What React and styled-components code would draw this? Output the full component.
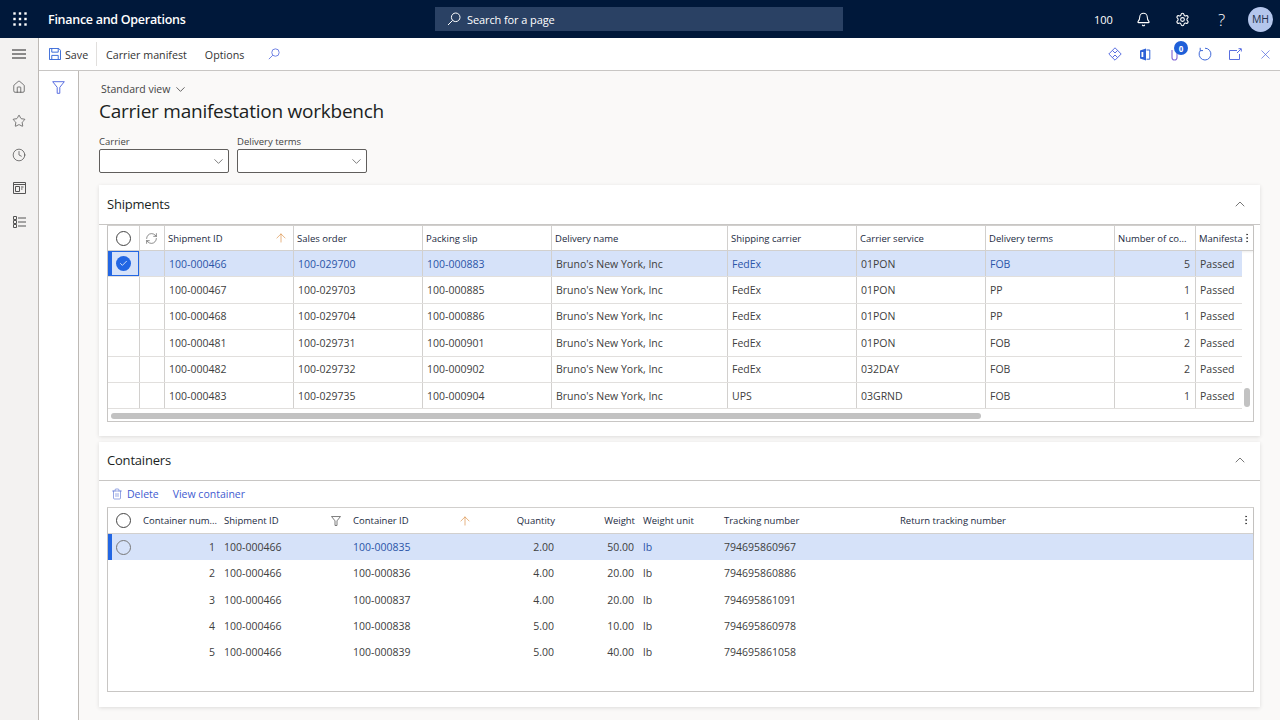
import styled, { createGlobalStyle } from "styled-components";
import { Bell, Settings, Home, Star, Clock, ChevronDown, ChevronUp, X, RefreshCw, Trash2, ArrowUp, EllipsisVertical, Check } from "lucide-react";

const GlobalStyle = createGlobalStyle`
    * { box-sizing: border-box; }
    html, body { margin: 0; height: 100%; }
    body {
        width: 1280px;
        height: 720px;
        overflow: hidden;
        font-family: "Open Sans", "Noto Sans", sans-serif;
        font-size: 10.5px;
        color: #333;
        background: #faf9f8;
    }
`;

const shipmentHead = "32px 25px 129px 129px 129px 176px 129px 129px 129px 81px 46px 13px";
const shipmentCols = "32px 25px 129px 129px 129px 176px 129px 129px 129px 81px 46px";
const containerCols = "32px 80px 129px 130px 80px 80px 81px 176px 1fr";

const shipments = [
    ["100-000466", "100-029700", "100-000883", "FedEx", "01PON", "FOB", 5],
    ["100-000467", "100-029703", "100-000885", "FedEx", "01PON", "PP", 1],
    ["100-000468", "100-029704", "100-000886", "FedEx", "01PON", "PP", 1],
    ["100-000481", "100-029731", "100-000901", "FedEx", "01PON", "FOB", 2],
    ["100-000482", "100-029732", "100-000902", "FedEx", "032DAY", "FOB", 2],
    ["100-000483", "100-029735", "100-000904", "UPS", "03GRND", "FOB", 1],
];

const containers = [
    [1, "100-000835", "2.00", "50.00", "794695860967"],
    [2, "100-000836", "4.00", "20.00", "794695860886"],
    [3, "100-000837", "4.00", "20.00", "794695861091"],
    [4, "100-000838", "5.00", "10.00", "794695860978"],
    [5, "100-000839", "5.00", "40.00", "794695861058"],
];

function Waffle() {
    return (
        <svg width="14" height="14" viewBox="0 0 14 14" fill="#fff">
            {[1.5, 7, 12.5].map(y => [1.5, 7, 12.5].map(x => <rect key={`${x}-${y}`} x={x - 1.2} y={y - 1.2} width="2.4" height="2.4" />))}
        </svg>
    );
}

function SearchGlass({ color, size = 14 }) {
    return (
        <svg width={size} height={size} viewBox="0 0 14 14" fill="none" stroke={color} strokeWidth="1">
            <circle cx="8.7" cy="5.3" r="4.3" />
            <path d="M5.6 8.4 1 13" />
        </svg>
    );
}

function SaveIcon() {
    return (
        <svg width="12" height="12" viewBox="0 0 13 13" fill="none" stroke="#2f62d6" strokeWidth="1">
            <path d="M.5.5h10l2 2v10H.5z" />
            <path d="M3 .5v4h7v-4M3 12.5V8h7v4.5" />
        </svg>
    );
}

function Hamburger() {
    return (
        <svg width="14" height="10" viewBox="0 0 14 10" stroke="#222" strokeWidth="1">
            <path d="M0 1h14M0 5h14M0 9h14" />
        </svg>
    );
}

function Workspace() {
    return (
        <svg width="13" height="12" viewBox="0 0 13 12" fill="none" stroke="#555" strokeWidth="1">
            <path d="M.5.5h12v11H.5zM.5 2.5h12M2.5 4.5h4v5h-4zM8 5h2.5M8 7h1.5" />
        </svg>
    );
}

function ModulesIcon() {
    return (
        <svg width="13" height="12" viewBox="0 0 13 12" fill="none" stroke="#555" strokeWidth="1">
            <path d="M.5.5h3v3h-3zM.5 4.5h3v3h-3zM.5 8.5h3v3h-3zM5 2h8M5 6h8M5 10h8" />
        </svg>
    );
}

function FunnelIcon({ color, size = 13 }) {
    return (
        <svg width={size} height={size} viewBox="0 0 13 13" fill="none" stroke={color} strokeWidth="1">
            <path d="M.7.7h11.6L7.8 6.3v6L5.2 12.3V6.3z" />
        </svg>
    );
}

function DiamondIcon() {
    return (
        <svg width="14" height="14" viewBox="0 0 14 14" fill="none" stroke="#5a6fe0" strokeWidth="1">
            <path d="M7 .8 13.2 7 7 13.2.8 7z" />
            <path d="M4.4 3.4 7 6 9.6 3.4M4.4 10.6 7 8l2.6 2.6" />
        </svg>
    );
}

function OfficeIcon() {
    return (
        <svg width="12" height="13" viewBox="0 0 12 13">
            <path d="M1 2.6 7 .5v12L1 10.6z" fill="#2f62d6" />
            <path d="M7.5 2h3.3v9.2H7.5" fill="none" stroke="#2f62d6" />
            <path d="M3.4 4v5" stroke="#fff" strokeWidth="1.8" />
        </svg>
    );
}

function PopOut() {
    return (
        <svg width="13" height="12" viewBox="0 0 13 12" fill="none" stroke="#5a6fe0" strokeWidth="1">
            <path d="M8 2.5H.5v9h10V6M8 5l4-4M9.5 .7h2.8v2.8" />
        </svg>
    );
}

function RefreshRing() {
    return (
        <svg width="14" height="14" viewBox="0 0 14 14" fill="none" stroke="#3f68d8" strokeWidth="1">
            <path d="M7 1.2a5.9 5.9 0 1 1-4.6 2.2" />
            <path d="M2.2 .8v2.8H5" />
        </svg>
    );
}

function Radio({ $dim }) {
    return <RadioCircle $dim={$dim} />;
}

export default function App() {
    return (
        <>
            <GlobalStyle />
            <Page>
                <TopBar>
                    <WaffleSlot><Waffle /></WaffleSlot>
                    <AppName>Finance and Operations</AppName>
                    <SearchBox>
                        <SearchGlass color="#fff" />
                        <span>Search for a page</span>
                    </SearchBox>
                    <TopRight>
                        <Company>100</Company>
                        <TopIcon><Bell size={15} strokeWidth={1.7} /></TopIcon>
                        <TopIcon><Settings size={15} strokeWidth={1.7} /></TopIcon>
                        <HelpMark>?</HelpMark>
                        <Avatar>MH</Avatar>
                    </TopRight>
                </TopBar>

                <Body>
                    <Rail>
                        <RailItem $h={32}><Hamburger /></RailItem>
                        <RailItem><Home size={14} strokeWidth={1.2} color="#444" /></RailItem>
                        <RailItem><Star size={14} strokeWidth={1.2} color="#444" /></RailItem>
                        <RailItem><Clock size={14} strokeWidth={1.2} color="#444" /></RailItem>
                        <RailItem $h={32}><Workspace /></RailItem>
                        <RailItem $h={35}><ModulesIcon /></RailItem>
                    </Rail>

                    <Main>
                        <ActionBar>
                            <SaveButton><SaveIcon /><span>Save</span></SaveButton>
                            <ActionTab>Carrier manifest</ActionTab>
                            <ActionTab>Options</ActionTab>
                            <ActionSearch><SearchGlass color="#5a6fe0" size={12} /></ActionSearch>
                            <ActionRight>
                                <ActionIcon><DiamondIcon /></ActionIcon>
                                <ActionIcon><OfficeIcon /></ActionIcon>
                                <ActionIcon>
                                    <svg width="8" height="14" viewBox="0 0 8 14" fill="none" stroke="#8a6fd8" strokeWidth="1.2"><path d="M1 3v7.5a2.5 2.5 0 0 0 5 0V3" /></svg>
                                    <Badge>0</Badge>
                                </ActionIcon>
                                <ActionIcon><RefreshRing /></ActionIcon>
                                <ActionIcon><PopOut /></ActionIcon>
                                <ActionIcon><X size={15} strokeWidth={1.1} color="#4a63dd" /></ActionIcon>
                            </ActionRight>
                        </ActionBar>

                        <Workspaces>
                            <FilterPane><FunnelIcon color="#5a6fe0" /></FilterPane>
                            <Content>
                                <ViewName>Standard view <ChevronDown size={15} strokeWidth={1.2} color="#333" /></ViewName>
                                <Title>Carrier manifestation workbench</Title>

                                <Filters>
                                    <Field>
                                        <Label>Carrier</Label>
                                        <Select><ChevronDown size={15} strokeWidth={1.1} color="#444" /></Select>
                                    </Field>
                                    <Field>
                                        <Label>Delivery terms</Label>
                                        <Select><ChevronDown size={15} strokeWidth={1.1} color="#444" /></Select>
                                    </Field>
                                </Filters>

                                <Card $h={251}>
                                    <CardHeader $h={40}>
                                        <CardTitle>Shipments</CardTitle>
                                        <ChevronUp size={16} strokeWidth={1.1} color="#444" />
                                    </CardHeader>
                                    <Grid $h={197}>
                                        <HeadRow $cols={shipmentHead} $h={25}>
                                            <HeadCell $line $center><Radio /></HeadCell>
                                            <HeadCell $line $center><RefreshCw size={13} strokeWidth={1.1} color="#444" /></HeadCell>
                                            <HeadCell $line>Shipment ID<SortArrow $at={5}><ArrowUp size={14} strokeWidth={1.1} /></SortArrow></HeadCell>
                                            <HeadCell $line>Sales order</HeadCell>
                                            <HeadCell $line>Packing slip</HeadCell>
                                            <HeadCell $line>Delivery name</HeadCell>
                                            <HeadCell $line>Shipping carrier</HeadCell>
                                            <HeadCell $line>Carrier service</HeadCell>
                                            <HeadCell $line>Delivery terms</HeadCell>
                                            <HeadCell $line>Number of co...</HeadCell>
                                            <HeadCell>Manifesta</HeadCell>
                                            <Kebab $nudge><EllipsisVertical size={12} strokeWidth={1.5} /></Kebab>
                                        </HeadRow>
                                        {shipments.map((s, i) => (
                                            <Row key={s[0]} $cols={shipmentCols} $h={26.4} $selected={i === 0} $fit>
                                                <Cell $line $center $marked={i === 0} $outlined={i === 0}>{i === 0 && <CheckDot><Check size={9} strokeWidth={2} color="#fff" /></CheckDot>}</Cell>
                                                <Cell $line />
                                                <Cell $line $link={i === 0}>{s[0]}</Cell>
                                                <Cell $line $link={i === 0}>{s[1]}</Cell>
                                                <Cell $line $link={i === 0}>{s[2]}</Cell>
                                                <Cell $line>Bruno's New York, Inc</Cell>
                                                <Cell $line $link={i === 0}>{s[3]}</Cell>
                                                <Cell $line>{s[4]}</Cell>
                                                <Cell $line $link={i === 0}>{s[5]}</Cell>
                                                <Cell $line $right>{s[6]}</Cell>
                                                <Cell>Passed</Cell>
                                            </Row>
                                        ))}
                                        <HScroll><HThumb /></HScroll>
                                        <VThumb />
                                    </Grid>
                                </Card>

                                <Card $h={265}>
                                    <CardHeader $h={39}>
                                        <CardTitle>Containers</CardTitle>
                                        <ChevronUp size={16} strokeWidth={1.1} color="#444" />
                                    </CardHeader>
                                    <GridToolbar>
                                        <ToolButton $gap={4}><Trash2 size={12} strokeWidth={1.1} />Delete</ToolButton>
                                        <ToolButton>View container</ToolButton>
                                    </GridToolbar>
                                    <Grid $h={185}>
                                        <HeadRow $cols={containerCols} $h={26}>
                                            <HeadCell $center><Radio /></HeadCell>
                                            <HeadCell $tight $flush>Container num...</HeadCell>
                                            <HeadCell $tight>Shipment ID<SortArrow $dark $at={8}><FunnelIcon color="#555" size={10} /></SortArrow></HeadCell>
                                            <HeadCell $tight>Container ID<SortArrow $at={7}><ArrowUp size={14} strokeWidth={1.1} /></SortArrow></HeadCell>
                                            <HeadCell $right>Quantity</HeadCell>
                                            <HeadCell $right>Weight</HeadCell>
                                            <HeadCell $tight>Weight unit</HeadCell>
                                            <HeadCell $tight>Tracking number</HeadCell>
                                            <HeadCell $tight>Return tracking number<Kebab $float><EllipsisVertical size={12} strokeWidth={1.5} /></Kebab></HeadCell>
                                        </HeadRow>
                                        {containers.map((c, i) => (
                                            <Row key={c[0]} $cols={containerCols} $h={26.25} $selected={i === 0} $plain>
                                                <Cell $center $marked={i === 0}>{i === 0 && <Radio $dim />}</Cell>
                                                <Cell $right $near>{c[0]}</Cell>
                                                <Cell $tight>100-000466</Cell>
                                                <Cell $tight $link={i === 0}>{c[1]}</Cell>
                                                <Cell $right>{c[2]}</Cell>
                                                <Cell $right>{c[3]}</Cell>
                                                <Cell $tight $link={i === 0}>lb</Cell>
                                                <Cell $tight>{c[4]}</Cell>
                                                <Cell />
                                            </Row>
                                        ))}
                                    </Grid>
                                </Card>
                            </Content>
                        </Workspaces>
                    </Main>
                </Body>
            </Page>
        </>
    );
}

const Page = styled.div`
    width: 1280px;
    height: 720px;
    display: flex;
    flex-direction: column;
`
const TopBar = styled.header`
    height: 38px;
    flex: none;
    background: #00183a;
    color: #fff;
    display: flex;
    align-items: center;
    position: relative;
`
const WaffleSlot = styled.div`
    width: 38px;
    padding-left: 13px;
    display: flex;
`
const AppName = styled.div`
    margin-left: 10px;
    width: 387px;
    font-size: 12.5px;
    font-weight: 600;
    letter-spacing: -0.28px;
`
const SearchBox = styled.div`
    width: 408px;
    height: 24px;
    background: #2a4164;
    display: flex;
    align-items: center;
    gap: 6px;
    padding-left: 12px;
    font-size: 11px;
    letter-spacing: -0.1px;
`
const TopRight = styled.div`
    margin-left: auto;
    display: flex;
    align-items: center;
`
const Company = styled.div`
    font-size: 11px;
    width: 25px;
    margin-right: 5px;
`
const TopIcon = styled.div`
    width: 39px;
    display: flex;
    justify-content: center;
`
const HelpMark = styled.div`
    width: 39px;
    text-align: center;
    font-size: 17px;
    font-weight: 300;
`
const Avatar = styled.div`
    width: 25px;
    height: 25px;
    border-radius: 50%;
    margin: 0 7px 0 7px;
    background: #b4c6ec;
    color: #22304a;
    font-size: 10.5px;
    display: flex;
    align-items: center;
    justify-content: center;
`
const Body = styled.div`
    flex: 1;
    display: flex;
    min-height: 0;
`
const Rail = styled.nav`
    width: 39px;
    flex: none;
    background: #f3f2f1;
    border-right: 1px solid #bdb9b5;
    display: flex;
    flex-direction: column;
    align-items: center;
`
const RailItem = styled.div`
    width: 100%;
    height: ${p => p.$h || 34}px;
    display: flex;
    align-items: center;
    justify-content: center;
`
const Main = styled.div`
    flex: 1;
    display: flex;
    flex-direction: column;
    min-width: 0;
`
const ActionBar = styled.div`
    height: 33px;
    flex: none;
    background: #fff;
    border-bottom: 1px solid #c8c6c4;
    display: flex;
    align-items: center;
    font-size: 10.7px;
    color: #333;
`
const SaveButton = styled.div`
    width: 58px;
    height: 24px;
    border-right: 1px solid #e1dfdd;
    display: flex;
    align-items: center;
    gap: 4px;
    padding-left: 10px;
    span { padding-top: 1px; }
`
const ActionTab = styled.div`
    margin-left: 9px;
    margin-right: 9px;
    padding-top: 1px;
`
const ActionSearch = styled.div`
    display: flex;
    margin-left: 15px;
`
const ActionRight = styled.div`
    margin-left: auto;
    display: flex;
    align-items: center;
`
const ActionIcon = styled.div`
    position: relative;
    width: 30px;
    display: flex;
    justify-content: center;
`
const Badge = styled.span`
    position: absolute;
    top: -6px;
    left: 14px;
    width: 14px;
    height: 14px;
    border-radius: 50%;
    background: #1f5fd8;
    color: #fff;
    font-size: 8px;
    font-weight: 700;
    display: flex;
    align-items: center;
    justify-content: center;
`
const Workspaces = styled.div`
    flex: 1;
    display: flex;
    min-height: 0;
`
const FilterPane = styled.aside`
    width: 40px;
    flex: none;
    background: #fff;
    border-right: 1px solid #bdb9b5;
    display: flex;
    justify-content: center;
    padding-top: 10px;
`
const Content = styled.main`
    flex: 1;
    padding: 10px 20px 0 20px;
    min-width: 0;
`
const ViewName = styled.div`
    display: flex;
    align-items: center;
    gap: 3px;
    height: 16px;
    padding-left: 2px;
    font-size: 10.5px;
    color: #444;
`
const Title = styled.h1`
    margin: 1px 0 0;
    height: 27px;
    line-height: 27px;
    font-size: 19px;
    font-weight: 500;
    letter-spacing: -0.24px;
    color: #201f1e;
`
const Filters = styled.div`
    display: flex;
    gap: 8px;
    margin-top: 9px;
`
const Field = styled.div`
    width: 130px;
`
const Label = styled.div`
    height: 15px;
    font-size: 9.5px;
    line-height: 15px;
    color: #444;
`
const Select = styled.div`
    height: 24px;
    background: #fff;
    border: 1px solid #605e5c;
    border-radius: 2px;
    display: flex;
    align-items: center;
    justify-content: flex-end;
    padding-right: 2px;
`
const Card = styled.section`
    height: ${p => p.$h}px;
    margin-top: 6px;
    background: #fff;
    box-shadow: 0 1px 4px rgba(0, 0, 0, 0.12);
    padding: 0 6px 0 8px;
    display: flex;
    flex-direction: column;
    &:first-of-type { margin-top: 12px; }
`
const CardHeader = styled.div`
    height: ${p => p.$h}px;
    margin: 0 -6px 0 -8px;
    padding: 0 12px 2px 8px;
    flex: none;
    border-bottom: 1px solid #c8c6c4;
    display: flex;
    align-items: center;
    justify-content: space-between;
`
const CardTitle = styled.h2`
    margin: 0;
    font-size: 13px;
    font-weight: 500;
    letter-spacing: -0.2px;
    color: #201f1e;
`
const GridToolbar = styled.div`
    height: 26px;
    flex: none;
    display: flex;
    align-items: center;
    gap: 14px;
    padding: 0 0 1px 4px;
`
const ToolButton = styled.div`
    display: flex;
    align-items: center;
    gap: ${p => p.$gap || 3}px;
    color: #3f5bd0;
    font-size: 10.5px;
`
const Grid = styled.div`
    height: ${p => p.$h}px;
    border: 1px solid #c8c6c4;
    border-top-color: #d2d0ce;
    position: relative;
    flex: none;
`
const HeadRow = styled.div`
    display: grid;
    grid-template-columns: ${p => p.$cols};
    height: ${p => p.$h}px;
    border-bottom: 1px solid #d2d0ce;
    box-shadow: 0 1px 2px rgba(0, 0, 0, 0.08);
`
const Row = styled.div`
    display: grid;
    grid-template-columns: ${p => p.$cols};
    height: ${p => p.$h}px;
    width: ${p => (p.$fit ? "fit-content" : "auto")};
    background: ${p => (p.$selected ? "#d6e2f9" : "#fff")};
    border-bottom: ${p => (p.$plain ? "none" : "1px solid #e1dfdd")};
`
const HeadCell = styled.div`
    position: relative;
    display: flex;
    align-items: center;
    min-width: 0;
    overflow: visible;
    white-space: nowrap;
    padding: ${p => (p.$flush ? "0 0 0 3px" : p.$tight ? "0 0 0 4px" : p.$center ? "0 1px 0 0" : p.$right ? "0 4px" : "0 3px")};
    justify-content: ${p => (p.$center ? "center" : p.$right ? "flex-end" : "flex-start")};
    border-right: ${p => (p.$line ? "1px solid #d2d0ce" : "none")};
    font-size: 9.5px;
    color: #1b2a41;
`
const Cell = styled.div`
    display: flex;
    align-items: center;
    min-width: 0;
    white-space: nowrap;
    padding: ${p => (p.$tight ? "0 0 0 4px" : p.$near ? "0 5px 0 0" : p.$center ? "0 1px 0 0" : p.$right ? "0 5px" : "0 4px")};
    justify-content: ${p => (p.$center ? "center" : p.$right ? "flex-end" : "flex-start")};
    border-right: ${p => (p.$line ? "1px solid #d2d0ce" : "none")};
    box-shadow: ${p => (p.$marked ? `inset 4px 0 0 #2266e3${p.$outlined ? ", inset 0 0 0 1px #2266e3" : ""}` : "none")};
    color: ${p => (p.$link ? "#2b55a8" : "#404040")};
    font-size: 10.5px;
`
const RadioCircle = styled.span`
    width: 15px;
    height: 15px;
    border-radius: 50%;
    border: 1px solid ${p => (p.$dim ? "#777" : "#444")};
    display: block;
`
const CheckDot = styled.span`
    width: 15px;
    height: 15px;
    border-radius: 50%;
    background: #2266e3;
    display: flex;
    align-items: center;
    justify-content: center;
`
const SortArrow = styled.span`
    position: absolute;
    right: ${p => p.$at || 6}px;
    top: 50%;
    transform: translateY(-50%);
    display: flex;
    color: ${p => (p.$dark ? "#555" : "#d98c3e")};
`
const Kebab = styled.span`
    display: flex;
    align-items: center;
    justify-content: center;
    color: #333;
    ${p => p.$nudge && "margin-left: -3px;"}
    ${p => p.$float && "position: absolute; right: 1px; top: 6px;"}
`
const HScroll = styled.div`
    position: absolute;
    left: 3px;
    right: 14px;
    bottom: 2px;
    height: 6px;
`
const HThumb = styled.div`
    width: 870px;
    height: 100%;
    border-radius: 3px;
    background: #c2c2c2;
`
const VThumb = styled.div`
    position: absolute;
    right: 3px;
    top: 162px;
    width: 6px;
    height: 19px;
    border-radius: 3px;
    background: #c2c2c2;
`
